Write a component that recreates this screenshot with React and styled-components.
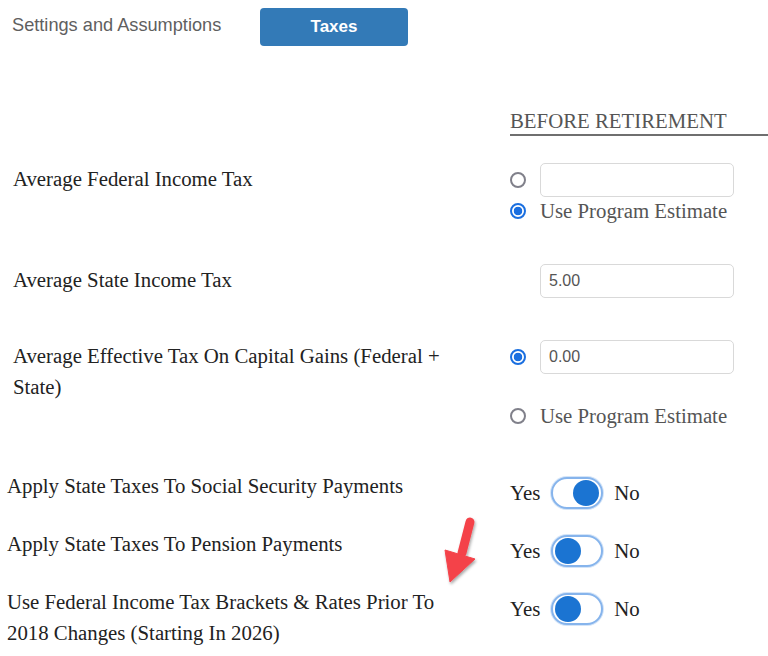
import React from "react";
import styled, { createGlobalStyle } from "styled-components";

const GlobalStyle = createGlobalStyle`
  html, body {
    margin: 0;
    padding: 0;
    background: #fff;
  }
  body {
    font-family: "Liberation Serif", "Times New Roman", serif;
  }
`;

function Radio({ checked }) {
  return <RadioDot $checked={checked} />;
}

function Toggle({ on }) {
  return (
    <ToggleWrap>
      <ToggleText>Yes</ToggleText>
      <Track>
        <Knob $on={on} />
      </Track>
      <ToggleText>No</ToggleText>
    </ToggleWrap>
  );
}

function Arrow() {
  return (
    <ArrowSvg width="60" height="80" viewBox="0 0 60 80">
      <defs>
        <filter id="sh" x="-30%" y="-30%" width="160%" height="160%">
          <feDropShadow dx="1" dy="2" stdDeviation="1.5" floodColor="#000" floodOpacity="0.35" />
        </filter>
      </defs>
      <g filter="url(#sh)" fill="#f4424a" stroke="#f4424a">
        <line x1="35" y1="7" x2="27" y2="38" strokeWidth="9" strokeLinecap="round" />
        <polygon points="15,67 10,35 40,44" strokeWidth="1" strokeLinejoin="round" />
      </g>
    </ArrowSvg>
  );
}

export default function App() {
  return (
    <Page>
      <GlobalStyle />
      <TopBar>
        <Crumb>Settings and Assumptions</Crumb>
        <TabButton>Taxes</TabButton>
      </TopBar>

      <HeadRow>
        <span />
        <ColumnTitle>Before Retirement</ColumnTitle>
      </HeadRow>

      <Row $top={27}>
        <Label $pad={13}>Average Federal Income Tax</Label>
        <Controls>
          <Option>
            <Radio />
            <Field defaultValue="" />
          </Option>
          <Option $h={28}>
            <Radio checked />
            <OptionText>Use Program Estimate</OptionText>
          </Option>
        </Controls>
      </Row>

      <Row $top={39}>
        <Label $pad={13}>Average State Income Tax</Label>
        <Controls>
          <Option>
            <Spacer />
            <Field defaultValue="5.00" />
          </Option>
        </Controls>
      </Row>

      <Row $top={42}>
        <Label $pad={13}>Average Effective Tax On Capital Gains (Federal + State)</Label>
        <Controls>
          <Option>
            <Radio checked />
            <Field defaultValue="0.00" />
          </Option>
          <Option $h={28} $top={28}>
            <Radio />
            <OptionText>Use Program Estimate</OptionText>
          </Option>
        </Controls>
      </Row>

      <Row $top={40}>
        <Label $pad={7}>Apply State Taxes To Social Security Payments</Label>
        <Toggle on />
      </Row>

      <Row $top={19}>
        <Label $pad={7}>Apply State Taxes To Pension Payments</Label>
        <Toggle />
      </Row>

      <Row $top={19}>
        <Label $pad={7}>
          Use Federal Income Tax Brackets &amp; Rates Prior To 2018 Changes (Starting In 2026)
        </Label>
        <Toggle />
      </Row>

      <Arrow />
    </Page>
  );
}

const Page = styled.div`
  position: relative;
  width: 768px;
  height: 656px;
  overflow: hidden;
  color: #222;
`;

const TopBar = styled.div`
  display: flex;
  align-items: center;
  padding: 8px 0 0 12px;
  height: 38px;
`;

const Crumb = styled.div`
  width: 248px;
  margin-bottom: 4px;
  font-family: "Liberation Sans", Arial, sans-serif;
  font-size: 18.2px;
  color: #5f5f5f;
`;

const TabButton = styled.button`
  width: 148px;
  height: 38px;
  border: none;
  border-radius: 4px;
  background: #337ab7;
  color: #fff;
  font-family: "Liberation Sans", Arial, sans-serif;
  font-weight: bold;
  font-size: 17px;
  padding: 0;
`;

const HeadRow = styled.div`
  display: grid;
  grid-template-columns: 510px 1fr;
  margin-top: 62px;
`;

const ColumnTitle = styled.div`
  font-size: 20.8px;
  line-height: 26px;
  text-transform: uppercase;
  color: #555;
  border-bottom: 2px solid #6f6f6f;
`;

const Row = styled.div`
  display: grid;
  grid-template-columns: 510px 1fr;
  align-items: start;
  margin-top: ${(p) => p.$top}px;
`;

const Label = styled.div`
  padding-left: ${(p) => p.$pad}px;
  max-width: 450px;
  font-size: 20.8px;
  line-height: 31px;
  color: #222;
`;

const Controls = styled.div`
  display: flex;
  flex-direction: column;
`;

const Option = styled.div`
  display: flex;
  align-items: center;
  gap: 14px;
  height: ${(p) => p.$h || 34}px;
  margin-top: ${(p) => p.$top || 0}px;
`;

const RadioDot = styled.span`
  box-sizing: border-box;
  width: 16px;
  height: 16px;
  border-radius: 50%;
  border: 2px solid ${(p) => (p.$checked ? "#1a6fe0" : "#80808a")};
  background: ${(p) =>
    p.$checked ? "radial-gradient(circle, #1a6fe0 0 4px, #fff 4.6px)" : "#fff"};
  flex: none;
`;

const Spacer = styled.span`
  width: 16px;
  flex: none;
`;

const Field = styled.input`
  box-sizing: border-box;
  width: 194px;
  height: 34px;
  border: 1px solid #d9d9d9;
  border-radius: 5px;
  padding: 0 8px;
  font-family: "Liberation Sans", Arial, sans-serif;
  font-size: 16px;
  color: #555;
  outline: none;
`;

const OptionText = styled.span`
  font-size: 20.8px;
  color: #555;
`;

const ToggleWrap = styled.div`
  display: flex;
  align-items: center;
  gap: 11px;
  margin-top: 7px;
  height: 32px;
`;

const ToggleText = styled.span`
  font-size: 20.8px;
  color: #222;
`;

const Track = styled.span`
  box-sizing: border-box;
  display: flex;
  align-items: center;
  width: 52px;
  height: 32px;
  padding: 0 2px;
  border-radius: 16px;
  border: 2px solid #86b4ec;
  box-shadow: 0 0 0 1px #d3e4f8;
  background: #fff;
`;

const Knob = styled.span`
  width: 26px;
  height: 26px;
  border-radius: 50%;
  background: #1b74d2;
  margin-left: ${(p) => (p.$on ? "auto" : "0")};
`;

const ArrowSvg = styled.svg`
  position: absolute;
  left: 435px;
  top: 515px;
`;
